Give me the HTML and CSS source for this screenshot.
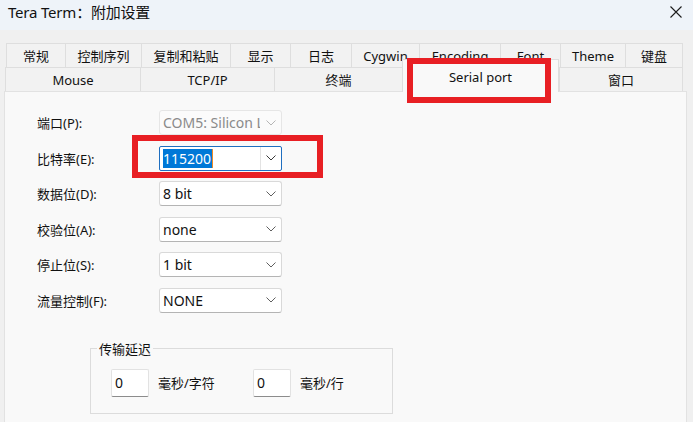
FILE: index.html
```html
<!DOCTYPE html>
<html lang="zh-CN">
<head>
    <meta charset="UTF-8">
    <meta name="viewport" content="width=device-width, initial-scale=1.0">
    <title>Tera Term：附加设置</title>
    <link rel="stylesheet" href="styles.css">
</head>
<body>
    <div class="window">
        <!-- Barra de título -->
        <div class="titlebar">
            <span class="title">Tera Term：附加设置</span>
            <svg class="close" width="12" height="12" viewBox="0 0 12 12">
                <path d="M0.5 0.5 L11.5 11.5 M11.5 0.5 L0.5 11.5" stroke="#1c1c1c" stroke-width="1.1" fill="none"/>
            </svg>
        </div>

        <!-- Pestañas -->
        <div class="tab-row back">
            <div class="tab">常规</div>
            <div class="tab">控制序列</div>
            <div class="tab">复制和粘贴</div>
            <div class="tab">显示</div>
            <div class="tab">日志</div>
            <div class="tab">Cygwin</div>
            <div class="tab">Encoding</div>
            <div class="tab">Font</div>
            <div class="tab">Theme</div>
            <div class="tab">键盘</div>
        </div>
        <div class="tab-row front">
            <div class="tab">Mouse</div>
            <div class="tab">TCP/IP</div>
            <div class="tab">终端</div>
            <div class="tab active">Serial port</div>
            <div class="tab">窗口</div>
        </div>

        <!-- Panel -->
        <div class="panel">
            <div class="form">
                <label>端口(P):</label>
                <div class="combo disabled">
                    <span class="combo-text">COM5: Silicon L</span>
                    <svg class="chevron" width="10" height="6" viewBox="0 0 10 6"><path d="M0.5 0.5 L5 5 L9.5 0.5" /></svg>
                </div>

                <label>比特率(E):</label>
                <div class="combo focused">
                    <span class="combo-text"><span class="selection">115200</span><span class="caret"></span></span>
                    <span class="divider"></span>
                    <svg class="chevron" width="10" height="6" viewBox="0 0 10 6"><path d="M0.5 0.5 L5 5 L9.5 0.5" /></svg>
                </div>

                <label>数据位(D):</label>
                <div class="combo">
                    <span class="combo-text">8 bit</span>
                    <svg class="chevron" width="10" height="6" viewBox="0 0 10 6"><path d="M0.5 0.5 L5 5 L9.5 0.5" /></svg>
                </div>

                <label>校验位(A):</label>
                <div class="combo">
                    <span class="combo-text">none</span>
                    <svg class="chevron" width="10" height="6" viewBox="0 0 10 6"><path d="M0.5 0.5 L5 5 L9.5 0.5" /></svg>
                </div>

                <label>停止位(S):</label>
                <div class="combo">
                    <span class="combo-text">1 bit</span>
                    <svg class="chevron" width="10" height="6" viewBox="0 0 10 6"><path d="M0.5 0.5 L5 5 L9.5 0.5" /></svg>
                </div>

                <label>流量控制(F):</label>
                <div class="combo">
                    <span class="combo-text">NONE</span>
                    <svg class="chevron" width="10" height="6" viewBox="0 0 10 6"><path d="M0.5 0.5 L5 5 L9.5 0.5" /></svg>
                </div>
            </div>

            <fieldset class="delay">
                <legend>传输延迟</legend>
                <div class="delay-row">
                    <div class="delay-item">
                        <div class="textbox">0</div>
                        <span class="unit">毫秒/字符</span>
                    </div>
                    <div class="delay-item">
                        <div class="textbox">0</div>
                        <span class="unit">毫秒/行</span>
                    </div>
                </div>
            </fieldset>
        </div>

        <!-- Marcas rojas -->
        <div class="mark mark-tab"></div>
        <div class="mark mark-baud"></div>
    </div>
</body>
</html>
```

FILE: styles.css
```css
/* Global */
body {
    margin: 0;
    padding: 0;
    background-color: #f0f0f0;
    font-family: "Noto Sans", "Noto Sans CJK SC", sans-serif;
    color: #111;
}

.window {
    position: relative;
    width: 693px;
    height: 422px;
    overflow: hidden;
    background-color: #f0f0f0;
}

/* Barra de título */
.titlebar {
    height: 30px;
    background-color: #eef3f9;
    display: flex;
    justify-content: space-between;
    align-items: flex-start;
    padding: 2px 0 0 8px;
    box-sizing: border-box;
}

.title {
    font-size: 15px;
    line-height: 20px;
    letter-spacing: -0.2px;
    color: #111;
}

.close {
    margin: 4px 11px 0 0;
}

/* Pestañas */
.tab-row {
    display: grid;
    grid-template-rows: 24px;
}

.tab-row.back {
    margin: 13px 0 0 6px;
    grid-template-columns: 59px 76px 89px 60px 61px 68px 81px 60px 65px 58px;
}

.tab-row.front {
    margin-left: 5px;
    grid-template-columns: 135px 134px 128px 157px 124px;
}

.tab {
    background-color: #f2f2f2;
    border-top: 1px solid #dedede;
    border-left: 1px solid #dedede;
    font-size: 13px;
    line-height: 23px;
    text-align: center;
    color: #111;
    white-space: nowrap;
}

.tab-row.back .tab {
    padding-top: 2px;
    line-height: 21px;
}

.tab-row.front .tab {
    padding-top: 1px;
    line-height: 22px;
}

.tab:last-child {
    border-right: 1px solid #dedede;
}

.tab-row.front .tab.active {
    position: relative;
    z-index: 2;
    height: 33px;
    margin-top: -8px;
    margin-bottom: -1px;
    padding-top: 6px;
    line-height: 23px;
    box-sizing: border-box;
    background-color: #f9f9f9;
    border-right: 1px solid #dedede;
}

/* Panel */
.panel {
    margin-left: 4px;
    width: 683px;
    height: 331px;
    box-sizing: border-box;
    background-color: #f9f9f9;
    border: 1px solid #e2e2e2;
    border-bottom: none;
    padding: 18px 0 0 32px;
}

.form {
    display: grid;
    grid-template-columns: 122px 123px;
    grid-auto-rows: 25px;
    row-gap: 10.6px;
    align-items: center;
}

.form label {
    font-size: 13px;
    line-height: 18px;
    padding-top: 1px;
    color: #111;
}

.combo {
    height: 25px;
    box-sizing: border-box;
    background-color: #fff;
    border: 1px solid #d9d9d9;
    border-bottom-color: #b4b4b4;
    border-radius: 3px;
    display: flex;
    align-items: center;
    padding-left: 3px;
}

.combo-text {
    flex: 1;
    font-size: 14px;
    line-height: 19px;
    white-space: nowrap;
    overflow: hidden;
    display: flex;
    align-items: center;
}

.chevron {
    margin: 0 5px 0 8px;
    fill: none;
    stroke: #5f5f5f;
    stroke-width: 1;
}

.combo.disabled {
    background-color: #fbfbfb;
    border-color: #e6e6e6;
}

.combo.disabled .combo-text {
    color: #8a8a8a;
}

.combo.disabled .chevron {
    stroke: #b5b5b5;
    margin-left: 6px;
}

.combo.focused {
    border: 1px solid #1f6fc0;
    border-radius: 2px;
}

.selection {
    background-color: #0078d7;
    color: #fff;
    padding: 0 1px 0 0;
    line-height: 19px;
}

.caret {
    width: 1px;
    height: 19px;
    background-color: #f08a24;
}

.divider {
    align-self: stretch;
    width: 1px;
    background-color: #e3e3e3;
}

.combo.focused .chevron {
    margin-left: 5px;
    stroke: #3a3a3a;
}

/* Retardo de transmisión */
.delay {
    margin: 28px 0 0 53px;
    width: 303px;
    box-sizing: border-box;
    border: 1px solid #dcdcdc;
    padding: 12px 0 16px 6px;
}

.delay legend {
    padding: 0 2px;
    font-size: 13px;
    line-height: 16px;
    color: #111;
}

.delay-row {
    display: grid;
    grid-template-columns: 142px auto;
    margin-left: 14px;
}

.delay-item {
    display: flex;
    align-items: center;
}

.textbox {
    width: 38px;
    height: 28px;
    box-sizing: border-box;
    background-color: #fff;
    border: 1px solid #e2e2e2;
    border-bottom-color: #8c8c8c;
    border-radius: 2px;
    padding-left: 3px;
    font-size: 14px;
    line-height: 25px;
}

.unit {
    margin-left: 9px;
    font-size: 13px;
    line-height: 18px;
}

/* Marcas rojas */
.mark {
    position: absolute;
    border: 6px solid #e81f24;
    box-sizing: border-box;
    z-index: 5;
}

.mark-tab {
    left: 407px;
    top: 58px;
    width: 144px;
    height: 45px;
}

.mark-baud {
    left: 132px;
    top: 135px;
    width: 191px;
    height: 43px;
}
```
